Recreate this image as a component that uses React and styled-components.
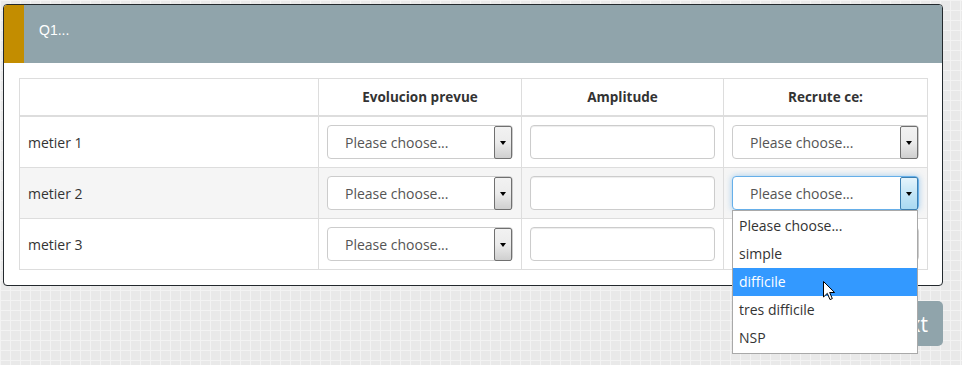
import React from "react";
import styled, { createGlobalStyle, css } from "styled-components";

const GlobalStyle = createGlobalStyle`
    html, body {
        margin: 0;
        padding: 0;
    }
    body {
        width: 962px;
        height: 365px;
        overflow: hidden;
        font-family: "Open Sans", "DejaVu Sans", sans-serif;
        background-color: #e9e9e9;
        background-image:
            linear-gradient(to right, #f3f3f3 1px, transparent 1px),
            linear-gradient(to bottom, #f3f3f3 1px, transparent 1px);
        background-size: 10px 10px;
    }
`;

const Page = styled.div`
    padding: 4px 0 0 3px;
    width: 940px;
`;

const Panel = styled.div`
    position: relative;
    z-index: 2;
    background: #fff;
    border: 1px solid #23292d;
    border-radius: 4px;
`;

const PanelHeader = styled.div`
    display: flex;
    height: 58px;
    background: #90a4ab;
    border-radius: 3px 3px 0 0;
    overflow: hidden;
`;

const Accent = styled.div`
    width: 20px;
    background: #c38d00;
`;

const HeaderTitle = styled.div`
    padding: 15px 15px 0;
    font-family: "Liberation Sans", Arial, sans-serif;
    font-size: 14px;
    line-height: 20px;
    color: #fff;
`;

const PanelBody = styled.div`
    padding: 15px;
`;

const Grid = styled.table`
    width: 100%;
    table-layout: fixed;
    border-collapse: collapse;
    border: 1px solid #dddddd;
    font-size: 14px;
    color: #333;
`;

const Th = styled.th`
    height: 36px;
    padding: 0 8px;
    border: 1px solid #dddddd;
    border-bottom: 2px solid #dddddd;
    font-size: 13.5px;
    font-weight: 700;
    text-align: center;
    vertical-align: middle;
`;

const Row = styled.tr`
    background: ${(p) => (p.$striped ? "#f5f5f5" : "#fff")};
`;

const Td = styled.td`
    height: 33px;
    padding: 8px;
    border: 1px solid #dddddd;
    vertical-align: middle;
    font-size: 14px;
`;

const SelectWrap = styled.div`
    position: relative;
`;

const SelectBox = styled.div`
    display: flex;
    align-items: center;
    box-sizing: border-box;
    height: 34px;
    border: 1px solid #cccccc;
    border-radius: 4px;
    background: #fff;
    font-size: 14px;
    color: #555;
    ${(p) =>
        p.$focused &&
        css`
            border-color: #66afe9;
            box-shadow: 0 0 6px rgba(102, 175, 233, 0.6);
        `}
`;

const SelectText = styled.span`
    flex: 1;
    padding-left: 17px;
    white-space: nowrap;
`;

const ArrowBox = styled.div`
    align-self: stretch;
    display: flex;
    align-items: center;
    justify-content: center;
    width: 16px;
    margin: 0 0 -1px;
    border: 1px solid ${(p) => (p.$focused ? "#3c7fb1" : "#707070")};
    border-radius: 2px;
    background: ${(p) =>
        p.$focused
            ? "linear-gradient(#e5f4fc 0%, #c4e5f6 50%, #a9d9f2 100%)"
            : "linear-gradient(#f2f2f2 0%, #ebebeb 50%, #cfcfcf 100%)"};

    &::after {
        content: "";
        border-left: 3.5px solid transparent;
        border-right: 3.5px solid transparent;
        border-top: 4px solid #000;
    }
`;

const TextInput = styled.input`
    display: block;
    box-sizing: border-box;
    width: 100%;
    height: 34px;
    border: 1px solid #cccccc;
    border-radius: 4px;
    background: #fff;
    box-shadow: inset 0 1px 1px rgba(0, 0, 0, 0.075);
    outline: none;
`;

const Options = styled.ul`
    position: absolute;
    top: 100%;
    left: 0;
    right: 1px;
    z-index: 5;
    margin: 0;
    padding: 1px 0;
    list-style: none;
    background: #fff;
    border: 1px solid #a9a9a9;
    font-size: 14px;
    color: #333;
`;

const Option = styled.li`
    position: relative;
    height: 28px;
    line-height: 28px;
    padding-left: 6px;
    background: ${(p) => (p.$active ? "#3399ff" : "transparent")};
    color: ${(p) => (p.$active ? "#fff" : "#333")};
`;

const Cursor = styled.svg`
    position: absolute;
    left: 90px;
    top: 13px;
`;

const Actions = styled.div`
    display: flex;
    justify-content: flex-end;
    margin-top: 15px;
`;

const NextButton = styled.button`
    height: 45px;
    padding: 0 15px;
    border: none;
    border-radius: 5px;
    background: #90a4ab;
    color: #fff;
    font-family: "Open Sans", sans-serif;
    font-size: 21px;
`;

const choices = ["Please choose...", "simple", "difficile", "tres difficile", "NSP"];

const Select = ({ focused, open }) => (
    <SelectWrap>
        <SelectBox $focused={focused}>
            <SelectText>Please choose...</SelectText>
            <ArrowBox $focused={focused} />
        </SelectBox>
        {open && (
            <Options>
                {choices.map((c) => (
                    <Option key={c} $active={c === "difficile"}>
                        {c}
                        {c === "difficile" && (
                            <Cursor width="13" height="20" viewBox="0 0 13 20">
                                <path
                                    d="M0.5 0.5 L0.5 16 L4.3 12.4 L7 18.6 L9.3 17.6 L6.7 11.5 L11.6 11.5 Z"
                                    fill="#fff"
                                    stroke="#000"
                                    strokeWidth="1"
                                    strokeLinejoin="round"
                                />
                            </Cursor>
                        )}
                    </Option>
                ))}
            </Options>
        )}
    </SelectWrap>
);

const rows = ["metier 1", "metier 2", "metier 3"];

const App = () => (
    <>
        <GlobalStyle />
        <Page>
            <Panel>
                <PanelHeader>
                    <Accent />
                    <HeaderTitle>Q1...</HeaderTitle>
                </PanelHeader>
                <PanelBody>
                    <Grid>
                        <colgroup>
                            <col style={{ width: 299 }} />
                            <col style={{ width: 203 }} />
                            <col style={{ width: 202 }} />
                            <col style={{ width: 204 }} />
                        </colgroup>
                        <thead>
                            <tr>
                                <Th />
                                <Th>Evolucion prevue</Th>
                                <Th>Amplitude</Th>
                                <Th>Recrute ce:</Th>
                            </tr>
                        </thead>
                        <tbody>
                            {rows.map((name, i) => (
                                <Row key={name} $striped={i === 1}>
                                    <Td>{name}</Td>
                                    <Td>
                                        <Select />
                                    </Td>
                                    <Td>
                                        <TextInput type="text" />
                                    </Td>
                                    <Td>
                                        <Select focused={i === 1} open={i === 1} />
                                    </Td>
                                </Row>
                            ))}
                        </tbody>
                    </Grid>
                </PanelBody>
            </Panel>
            <Actions>
                <NextButton>Next</NextButton>
            </Actions>
        </Page>
    </>
);

export default App;
